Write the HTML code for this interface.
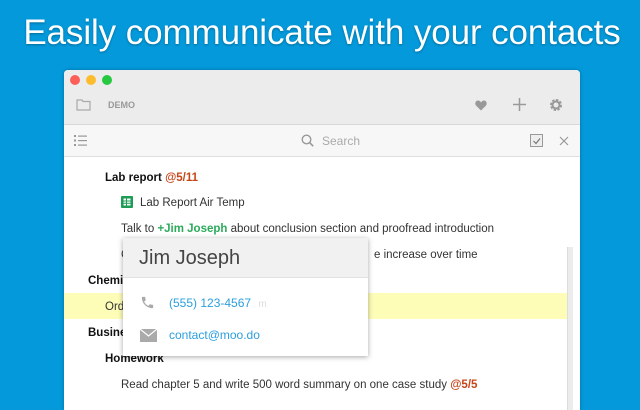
<!DOCTYPE html>
<html><head><meta charset="utf-8"><style>
*{margin:0;padding:0;box-sizing:border-box}
body{width:640px;height:400px;overflow:hidden;background:#0399db;font-family:"Liberation Sans",sans-serif;position:relative}
.title{position:absolute;left:2px;width:640px;top:13px;text-align:center;color:#fff;font-size:35px;letter-spacing:-0.1px;text-shadow:0 1px 2px rgba(0,0,0,.3)}
.win{position:absolute;left:64px;top:70px;width:516px;height:340px;background:#fff;border-radius:4px 4px 0 0;overflow:hidden;box-shadow:0 0 3px rgba(0,0,0,.3)}
.tb{position:absolute;left:0;top:0;width:100%;height:55px;background:#ececec;border-bottom:1px solid #d8d8d8}
.dot{position:absolute;top:5px;width:10px;height:10px;border-radius:50%}
.sb{position:absolute;left:0;top:55px;width:100%;height:32px;background:#f7f7f7;border-bottom:1px solid #e0e0e0}
.t{position:absolute;font-size:11.5px;color:#333;white-space:nowrap}
.b{font-weight:bold;color:#111}
.red{color:#c6461a;font-weight:bold}
.pop{position:absolute;left:123px;top:238px;width:245px;height:118px;background:#fff;box-shadow:0 1px 5px rgba(0,0,0,.35)}
</style></head><body>
<div class="title">Easily communicate with your contacts</div>
<div class="win">
 <div class="tb">
  <div class="dot" style="left:6px;background:#fc5f57"></div>
  <div class="dot" style="left:22px;background:#fdbc2e"></div>
  <div class="dot" style="left:38px;background:#28c840"></div>
  <svg style="position:absolute;left:12px;top:29px" width="15" height="12" viewBox="0 0 15 12"><path d="M1 1h5l1 1.5h7V11H1z" fill="none" stroke="#aaa" stroke-width="1.2"/></svg>
  <div class="t" style="left:44px;top:30px;font-size:9px;font-weight:bold;color:#999">DEMO</div>
  <svg style="position:absolute;left:411px;top:30px" width="12" height="11" viewBox="0 0 12 11"><path d="M6 10.5L1 5.5C-0.5 3.8 0.5 0.5 3 0.5 4.5 0.5 5.5 1.5 6 2.5 6.5 1.5 7.5 0.5 9 0.5 11.5 0.5 12.5 3.8 11 5.5z" fill="#999"/></svg>
  <svg style="position:absolute;left:449px;top:28px" width="13" height="13"><path d="M6.5 0v13M0 6.5h13" stroke="#999" stroke-width="1.5"/></svg>
  <svg style="position:absolute;left:485px;top:28px" width="14" height="14" viewBox="0 0 14 14"><circle cx="7" cy="7" r="4.5" fill="none" stroke="#999" stroke-width="3" stroke-dasharray="2.2 1.3"/><circle cx="7" cy="7" r="3.5" fill="none" stroke="#999" stroke-width="2"/></svg>
 </div>
 <div class="sb">
  <svg style="position:absolute;left:10px;top:10px" width="13" height="11"><g fill="#999"><rect x="0" y="0" width="2" height="2"/><rect x="0" y="4.5" width="2" height="2"/><rect x="0" y="9" width="2" height="2"/><rect x="4" y="0.5" width="9" height="1.2"/><rect x="4" y="5" width="9" height="1.2"/><rect x="4" y="9.5" width="9" height="1.2"/></g></svg>
  <svg style="position:absolute;left:237px;top:9px" width="13" height="13"><circle cx="5.5" cy="5.5" r="4.3" fill="none" stroke="#999" stroke-width="1.4"/><path d="M8.6 8.6l3.6 3.6" stroke="#999" stroke-width="1.6"/></svg>
  <div class="t" style="left:258px;top:9px;font-size:12px;color:#aaa">Search</div>
  <svg style="position:absolute;left:466px;top:9px" width="13" height="13"><rect x=".5" y=".5" width="12" height="12" fill="#eee" stroke="#999"/><path d="M3.5 7l2.5 2.5 4-5" fill="none" stroke="#777" stroke-width="1.2"/></svg>
  <svg style="position:absolute;left:495px;top:11px" width="10" height="10"><path d="M1 1l8 8M9 1l-8 8" stroke="#999" stroke-width="1.2"/></svg>
 </div>
 <div style="position:absolute;left:0;top:223px;width:508px;height:26px;background:#fdfdb8"></div>
 <div style="position:absolute;left:503px;top:177px;width:6px;height:170px;background:#ececec;border-left:1px solid #ddd"></div>
 <div class="t b" style="left:41px;top:102px">Lab report <span class="red">@5/11</span></div>
 <svg style="position:absolute;left:57px;top:126px" width="12" height="12"><rect width="12" height="12" rx="1" fill="#1e9d57"/><rect x="2.5" y="2.5" width="7" height="7" fill="#fff"/><path d="M2.5 5h7M2.5 7.3h7M5.5 2.5v7" stroke="#1e9d57" stroke-width="1"/></svg>
 <div class="t" style="left:76px;top:127px">Lab Report Air Temp</div>
 <div class="t" style="left:57px;top:153px">Talk to <span style="color:#2bab5a;font-weight:bold">+Jim Joseph</span> about conclusion section and proofread introduction</div>
 <div class="t" style="left:57px;top:179px">C</div>
 <div class="t" style="left:310px;top:179px">e increase over time</div>
 <div class="t b" style="left:24px;top:205px">Chemistry</div>
 <div class="t" style="left:41px;top:231px">Order</div>
 <div class="t b" style="left:24px;top:257px">Business</div>
 <div class="t b" style="left:41px;top:283px">Homework</div>
 <div class="t" style="left:57px;top:309px">Read chapter 5 and write 500 word summary on one case study <span class="red">@5/5</span></div>
</div>
<div class="pop">
 <div style="height:40px;background:#f1f1f1;border-bottom:1px solid #e2e2e2"></div>
 <div class="t" style="left:16px;top:9px;font-size:20px;color:#444">Jim Joseph</div>
 <svg style="position:absolute;left:17px;top:57px" width="15" height="15" viewBox="0 0 24 24"><path d="M6.6 10.8c1.4 2.8 3.8 5.1 6.6 6.6l2.2-2.2c.3-.3.7-.4 1-.2 1.1.4 2.300.6 3.6.6.6 0 1 .4 1 1V20c0 .6-.4 1-1 1C10.6 21 3 13.4 3 4c0-.6.4-1 1-1h3.5c.6 0 1 .4 1 1 0 1.3.2 2.5.6 3.6.1.3 0 .7-.2 1z" fill="#aaa"/></svg>
 <div class="t" style="left:46px;top:58px;font-size:12px;color:#2b9fdd">(555) 123-4567 <span style="color:#ddd;font-size:10px;margin-left:4px">m</span></div>
 <svg style="position:absolute;left:17px;top:91px" width="17" height="13"><rect width="17" height="13" fill="#aaa"/><path d="M0 0l8.5 7 8.5-7" fill="none" stroke="#fff" stroke-width="1.2"/></svg>
 <div class="t" style="left:46px;top:90px;font-size:12px;color:#2b9fdd">contact@moo.do</div>
</div>
</body></html>
